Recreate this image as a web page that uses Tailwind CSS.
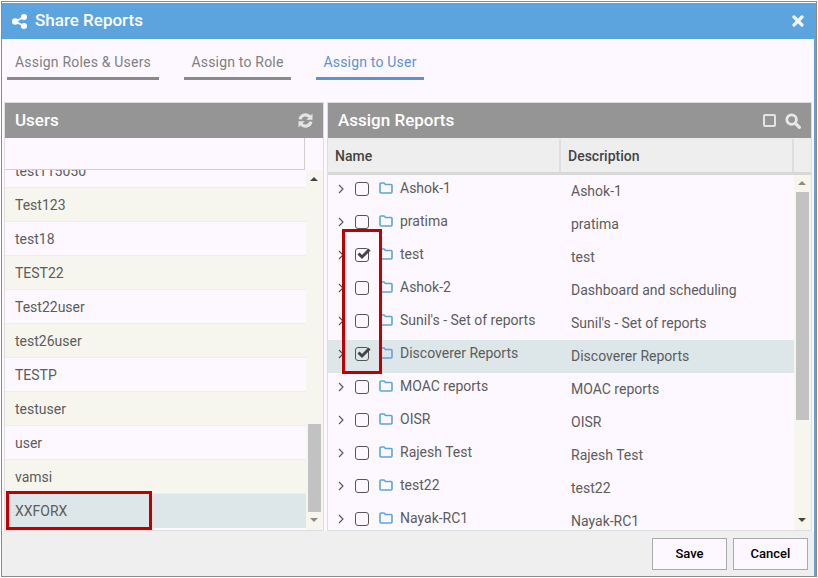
<!DOCTYPE html>
<html lang="en">
<head>
  <meta charset="UTF-8" />
  <title>Share Reports</title>
  <script src="https://cdn.jsdelivr.net/npm/@tailwindcss/browser@4"></script>
</head>
<body class="bg-white font-['Roboto',sans-serif] w-[818px] h-[578px] overflow-hidden">
  <div class="relative ml-px mt-px w-[816px] h-[576px] border border-[#8a8a8a] pt-px flex flex-col bg-white">
    <!-- Header -->
    <div class="h-9 shrink-0 bg-[#5ba4de] flex items-center justify-between pl-[10px] pr-[12px] text-white">
      <div class="flex items-center gap-[8px]">
        <svg class="w-[15px] h-[15px]" viewBox="0 0 15 15" fill="#fff">
          <circle cx="12" cy="3" r="3"/><circle cx="12" cy="12" r="3"/><circle cx="3.2" cy="7.5" r="3.2"/>
          <path d="M3.2 7.5L12 3M3.2 7.5L12 12" stroke="#fff" stroke-width="1.8"/>
        </svg>
        <span class="text-[17px] font-medium">Share Reports</span>
      </div>
      <svg class="w-[12px] h-[12px]" viewBox="0 0 12 12" stroke="#f0f6fc" stroke-width="3.2" stroke-linecap="round"><path d="M2 2l8 8M10 2l-8 8"/></svg>
    </div>

    <div class="flex-1 flex flex-col bg-[#fdf8ff] border-r-2 border-[#5ba4de]">
      <!-- Tabs -->
      <div class="h-[63px] shrink-0 flex pl-[5px] gap-[25px] text-sm tracking-[0.2px] text-[#808080]">
        <div class="w-[152px] h-[28px] mt-[13px] pb-[5px] border-b-[3px] border-[#8a8a8a] flex items-center justify-center">Assign Roles &amp; Users</div>
        <div class="w-[107px] h-[28px] mt-[13px] pb-[5px] border-b-[3px] border-[#8a8a8a] flex items-center justify-center">Assign to Role</div>
        <div class="w-[108px] h-[28px] mt-[13px] pb-[5px] border-b-[3px] border-[#5b93d3] text-[#5b93d3] flex items-center justify-center">Assign to User</div>
      </div>

      <!-- Panels -->
      <div class="h-[429px] shrink-0 flex pl-[2px] gap-[3px]">
        <!-- Users -->
        <div class="w-[320px] border border-[#dedede] flex flex-col overflow-hidden">
          <div class="h-[35px] shrink-0 bg-[#959595] flex items-center justify-between pl-[10px] pr-[10px]">
            <span class="text-[17px] font-medium text-white">Users</span>
            <svg class="w-[15px] h-[15px]" viewBox="0 0 15 15" fill="none" stroke="#e4e4e4" stroke-width="3">
              <path d="M2 6.4A5.6 5.6 0 0 1 12 4.2"/><path d="M13 8.6A5.6 5.6 0 0 1 3 10.8"/>
              <path d="M14.5 .5v6.2H8.3z" fill="#e4e4e4" stroke="none"/><path d="M.5 14.5V8.3h6.2z" fill="#e4e4e4" stroke="none"/>
            </svg>
          </div>
          <div class="h-8 shrink-0 w-[300px] border-r border-b border-[#cfcfcf] bg-[#fdf8ff]"></div>
          <div class="flex-1 flex min-h-0">
            <div class="w-[301px] overflow-hidden text-sm text-[#5c5c5c]">
              <div class="-mt-[16px]">
                <div class="h-[34px] flex items-center pl-[10px] border-b border-[#eeeeee] bg-[#fdf8ff]">test115050</div>
                <div class="h-[34px] flex items-center pl-[10px] border-b border-[#eeeeee] bg-[#f6f6ef]">Test123</div>
                <div class="h-[34px] flex items-center pl-[10px] border-b border-[#eeeeee] bg-[#fdf8ff]">test18</div>
                <div class="h-[34px] flex items-center pl-[10px] border-b border-[#eeeeee] bg-[#f6f6ef]">TEST22</div>
                <div class="h-[34px] flex items-center pl-[10px] border-b border-[#eeeeee] bg-[#fdf8ff]">Test22user</div>
                <div class="h-[34px] flex items-center pl-[10px] border-b border-[#eeeeee] bg-[#f6f6ef]">test26user</div>
                <div class="h-[34px] flex items-center pl-[10px] border-b border-[#eeeeee] bg-[#fdf8ff]">TESTP</div>
                <div class="h-[34px] flex items-center pl-[10px] border-b border-[#eeeeee] bg-[#f6f6ef]">testuser</div>
                <div class="h-[34px] flex items-center pl-[10px] border-b border-[#eeeeee] bg-[#fdf8ff]">user</div>
                <div class="h-[34px] flex items-center pl-[10px] border-b border-[#eeeeee] bg-[#f6f6ef]">vamsi</div>
                <div class="h-[34px] flex items-center pl-[10px] border-b border-[#e4e4dc] bg-[#dde6e8]">XXFORX</div>
              </div>
            </div>
            <!-- scrollbar -->
            <div class="flex-1 relative bg-[#f6f6ef]">
              <div class="absolute left-[2px] top-[254px] w-[13px] h-[88px] bg-[#c2c2c2]"></div>
              <div class="absolute left-[4px] top-[7px] w-0 h-0 border-x-[4px] border-x-transparent border-b-[4px] border-b-[#444]"></div>
              <div class="absolute left-[4px] top-[348px] w-0 h-0 border-x-[4px] border-x-transparent border-t-[4px] border-t-[#8a8a8a]"></div>
            </div>
          </div>
        </div>

        <!-- Assign Reports -->
        <div class="w-[485px] border border-[#dedede] flex flex-col overflow-hidden">
          <div class="h-[35px] shrink-0 bg-[#959595] flex items-center justify-between pl-[10px] pr-[10px]">
            <span class="text-[17px] font-medium text-white">Assign Reports</span>
            <div class="flex items-center gap-[9px]">
              <span class="w-[13px] h-[13px] rounded-[2px] border-2 border-[#e4e4e4]"></span>
              <svg class="w-[16px] h-[16px]" viewBox="0 0 16 16" fill="none" stroke="#e8e8e8"><circle cx="6.6" cy="6.6" r="4.8" stroke-width="2.8"/><path d="M10.4 10.4l4 4" stroke-width="3.2" stroke-linecap="round"/></svg>
            </div>
          </div>
          <div class="h-[37px] shrink-0 pt-px flex bg-[#eeeeee] border-b-[3px] border-[#d8d8d8] text-sm font-medium text-[#444]">
            <div class="w-[233px] pl-[7px] flex items-center border-r-2 border-[#dedede]">Name</div>
            <div class="w-[233px] pl-[7px] flex items-center border-r-2 border-[#dedede]">Description</div>
            <div class="flex-1"></div>
          </div>
          <div class="flex-1 flex min-h-0">
            <div id="rows" class="w-[466px] overflow-hidden text-sm text-[#5c5c5c]"></div>
            <div class="flex-1 relative bg-[#f6f6ef]">
              <div class="absolute left-[2px] top-[17px] w-[13px] h-[228px] bg-[#c2c2c2]"></div>
              <div class="absolute left-[4px] top-[6px] w-0 h-0 border-x-[4px] border-x-transparent border-b-[4px] border-b-[#8a8a8a]"></div>
              <div class="absolute left-[4px] top-[343px] w-0 h-0 border-x-[4px] border-x-transparent border-t-[4px] border-t-[#444]"></div>
            </div>
          </div>
        </div>
      </div>

      <!-- Footer -->
      <div class="flex-1 bg-[#efefef] flex justify-end items-start gap-[6px] pt-[7px] pr-[6px]">
        <button class="w-[75px] h-[32px] bg-[#fdf8ff] border border-[#aaaaaa] text-[13px] font-medium text-black">Save</button>
        <button class="w-[75px] h-[32px] bg-[#fdf8ff] border border-[#aaaaaa] text-[13px] font-medium text-black">Cancel</button>
      </div>
    </div>

    <!-- Red annotation boxes -->
    <div class="absolute left-[4px] top-[489px] w-[146px] h-[39px] border-[3px] border-[#c00000]"></div>
    <div class="absolute left-[340px] top-[227px] w-[40px] h-[145px] border-[3px] border-[#c00000]"></div>
  </div>

  <script>
    const reports = [
      ["Ashok-1", "Ashok-1", false],
      ["pratima", "pratima", false],
      ["test", "test", true],
      ["Ashok-2", "Dashboard and scheduling", false],
      ["Sunil's - Set of reports", "Sunil's - Set of reports", false],
      ["Discoverer Reports", "Discoverer Reports", true, true],
      ["MOAC reports", "MOAC reports", false],
      ["OISR", "OISR", false],
      ["Rajesh Test", "Rajesh Test", false],
      ["test22", "test22", false],
      ["Nayak-RC1", "Nayak-RC1", false]
    ];
    const tick = '<svg class="absolute left-[1px] -top-[1px] w-[14px] h-[12px]" viewBox="0 0 14 12" fill="none" stroke="#444" stroke-width="3"><path d="M1.5 5.5l3.5 3.5 7.5-7.5"/></svg>';
    const html = reports.map(([name, desc, checked, selected]) => `
      <div class="h-[33px] flex ${selected ? "bg-[#dde6e8]" : ""}">
        <div class="w-[233px] flex items-start">
          <svg class="w-[6px] h-[10px] ml-[10px] mt-[9px] shrink-0" viewBox="0 0 6 10" fill="none" stroke="#555" stroke-width="1.1"><path d="M1 1l4 4-4 4"/></svg>
          <span class="relative w-[14px] h-[14px] ml-[11px] mt-[7px] shrink-0 rounded-[3px] border-[1.5px] border-[#555]">${checked ? tick : ""}</span>
          <svg class="w-[14px] h-[12px] ml-[10px] mt-[7px] shrink-0" viewBox="0 0 14 12" fill="none" stroke="#5ba4de" stroke-width="1.6"><path d="M1 10V2a1 1 0 0 1 1-1h3l1.5 1.5H12a1 1 0 0 1 1 1V10a1 1 0 0 1-1 1H2a1 1 0 0 1-1-1z"/></svg>
          <span class="ml-[7px] mt-[3px] whitespace-nowrap">${name}</span>
        </div>
        <div class="flex-1 pl-[10px] pt-[6px] whitespace-nowrap">${desc}</div>
      </div>`).join("");
    document.getElementById("rows").innerHTML = html;
  </script>
</body>
</html>
